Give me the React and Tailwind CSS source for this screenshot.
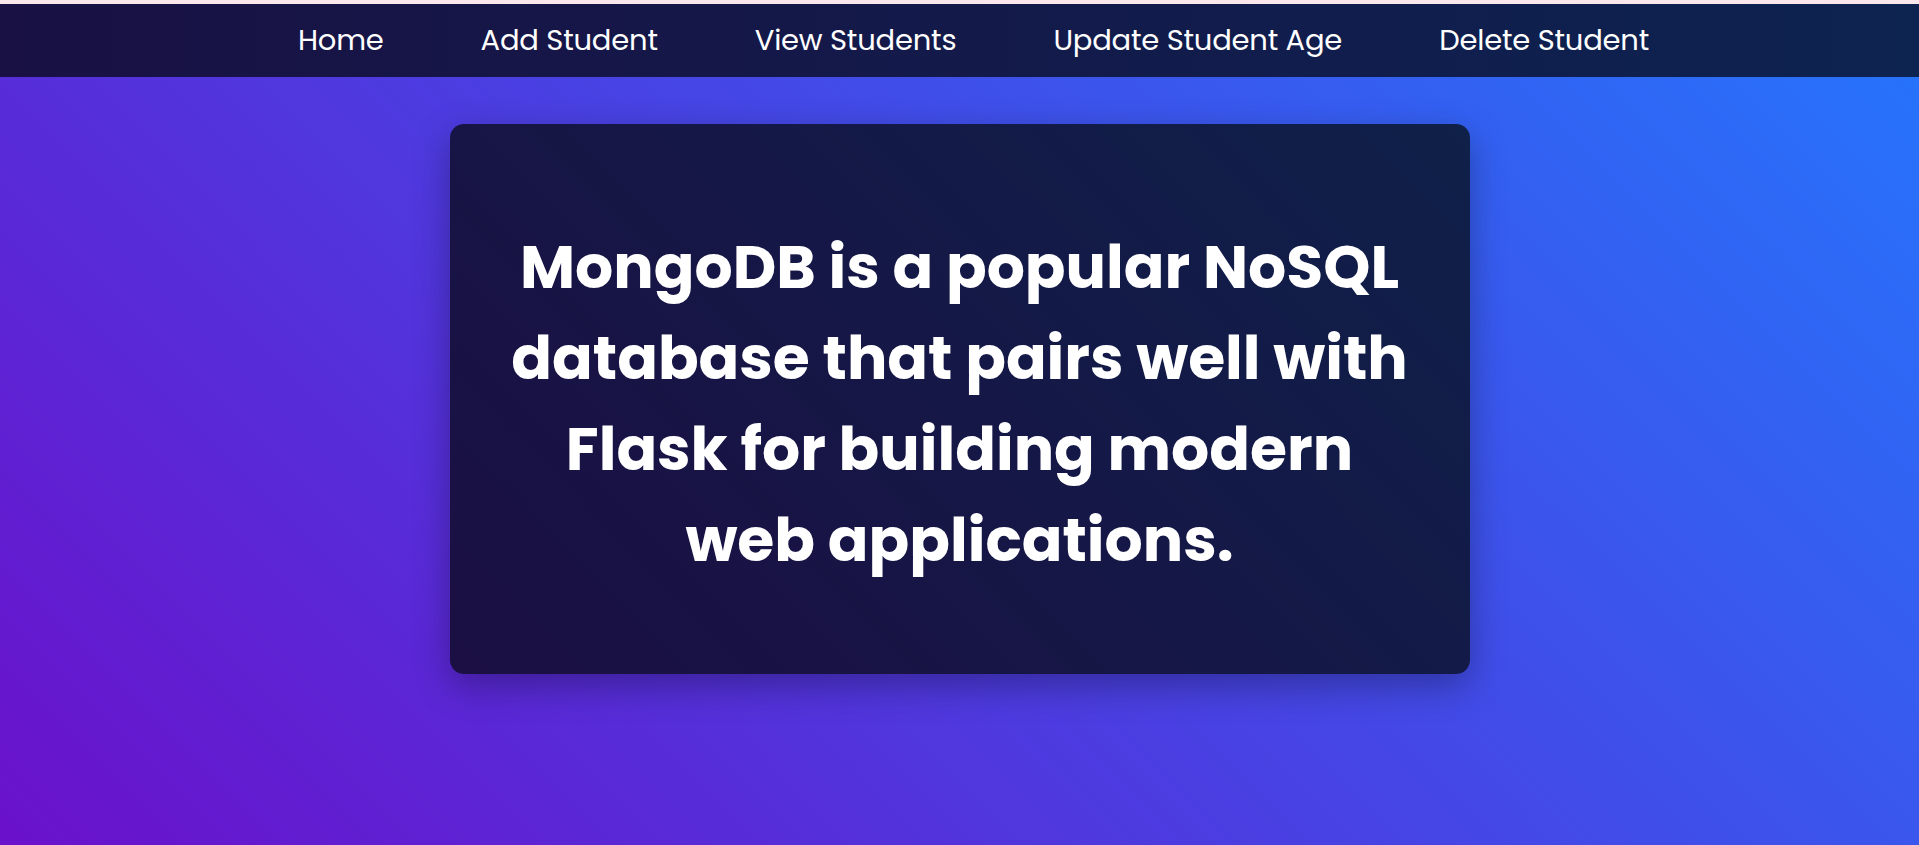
export default function App() {
  const links = ['Home', 'Add Student', 'View Students', 'Update Student Age', 'Delete Student'];

  return (
    <div className="min-h-screen flex flex-col bg-[#fbe8ec] pt-[4px]" style={{ fontFamily: 'Poppins, Inter, "Open Sans", sans-serif' }}>
      <div className="flex-1 flex flex-col bg-[linear-gradient(45deg,#6a11cb,#2575fc)]">
        <nav className="h-[73px] flex items-center justify-center pl-[28px] gap-[97px] bg-[linear-gradient(90deg,#191144,#0d2350)]">
          {links.map((l) => (
            <a key={l} href="#" className="text-white text-[29px] font-normal tracking-[-0.2px]">
              {l}
            </a>
          ))}
        </nav>

        <main className="flex justify-center pt-[47px]">
          <div className="w-[1020px] h-[550px] rounded-[14px] bg-[linear-gradient(45deg,#1b0f43,#0f2049)] shadow-[0_12px_36px_rgba(0,0,0,0.3)] flex items-center justify-center pt-[10px]">
            <h1 className="text-white text-[60px] font-bold leading-[91px] text-center">
              MongoDB is a popular NoSQL<br />
              database that pairs well with<br />
              Flask for building modern<br />
              web applications.
            </h1>
          </div>
        </main>
      </div>
    </div>
  );
}
